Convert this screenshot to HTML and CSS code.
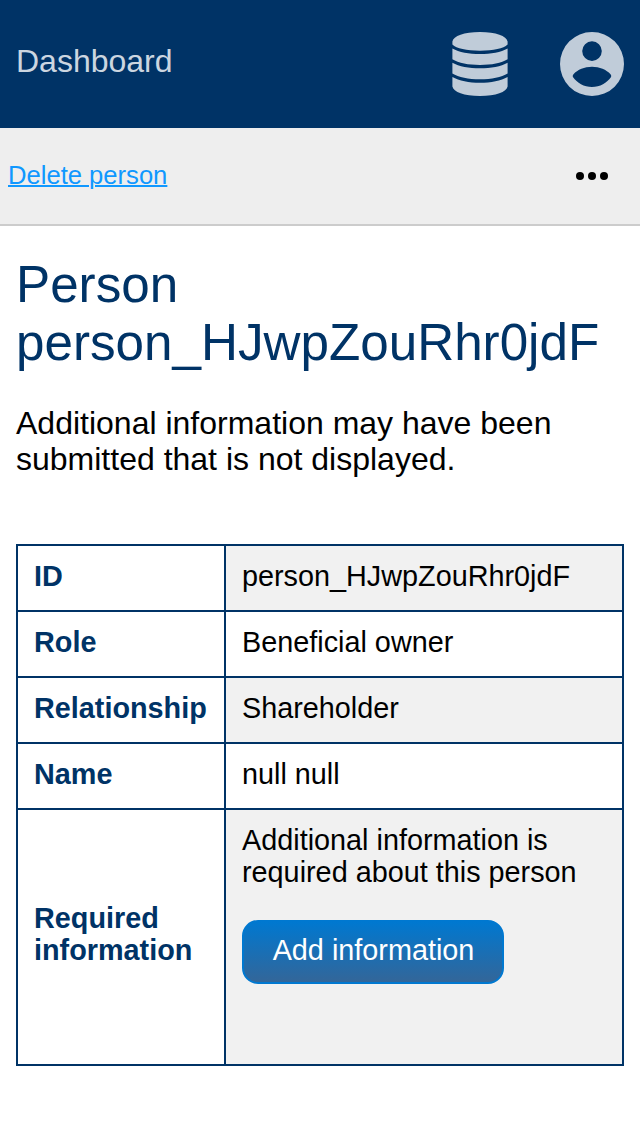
FILE: index.html
```html
<!DOCTYPE html>
<html lang="en">
<head>
<meta charset="utf-8">
<title>Person</title>
<link rel="stylesheet" href="styles.css">
</head>
<body>
<header class="header">
  <a class="brand">Dashboard</a>
  <div class="menus">
    <svg class="icon-db" viewBox="0 0 56 64"><path d="M.4 9.500C1.500 4 12 0 28 0s26.500 4 27.600 9.500v3C51.500 16.500 41.500 18.700 28 18.700S4.500 16.500.4 12.500zM.4 16.400C7 20.200 17 22 28 22S49 20.200 55.600 16.400v10.800C49.500 31 39.500 32.900 28 32.900S6.500 31 .4 27.200zM.4 30.800C7 34.600 17 36.300 28 36.300s21-1.700 27.600-5.500v10.700C49.500 45.300 39.500 47.300 28 47.300S6.500 45.300.4 41.500zM.4 45C7 48.900 17 50.800 28 50.800s21-1.900 27.600-5.800v9.500C54.500 60 44 64 28 64S1.500 60 .4 54.500z"/></svg>
    <svg class="icon-user" viewBox="0 0 64 64"><path fill-rule="evenodd" d="M32 0a32 32 0 1 0 0 64a32 32 0 1 0 0-64zM32 9.300a9.800 9.800 0 1 1 0 19.600a9.800 9.800 0 1 1 0-19.600zM32 55C24 55 17 50.700 13.100 45.200C12.500 44.200 12.700 43.100 13.500 42.200C17.500 37.600 24.500 34.700 32 34.700S46.500 37.600 50.500 42.200C51.300 43.100 51.500 44.200 50.900 45.200C47 50.700 40 55 32 55z"/></svg>
  </div>
</header>
<nav class="navbar">
  <a class="nav-link">Delete person</a>
  <svg class="dots" viewBox="0 0 32 8"><circle cx="4" cy="4" r="4"/><circle cx="16" cy="4" r="4"/><circle cx="28" cy="4" r="4"/></svg>
</nav>
<main class="content">
  <h1 class="title">Person person_HJwpZouRhr0jdF</h1>
  <p class="intro">Additional information may have been submitted that is not displayed.</p>
  <table class="details">
    <tr><th>ID</th><td>person_HJwpZouRhr0jdF</td></tr>
    <tr><th>Role</th><td>Beneficial owner</td></tr>
    <tr><th>Relationship</th><td>Shareholder</td></tr>
    <tr><th>Name</th><td>null null</td></tr>
    <tr class="required"><th>Required information</th><td>Additional information is required about this person<a class="button">Add information</a></td></tr>
  </table>
</main>
</body>
</html>
```
FILE: styles.css
```css
body {
  margin: 0;
  background: #fff;
  color: #000;
  font-family: "Liberation Sans", Arial, sans-serif;
}
.header {
  box-sizing: border-box;
  display: flex;
  justify-content: space-between;
  height: 128px;
  padding: 32px 16px;
  background: #036;
}
.brand {
  color: #ccd6e0;
  font-size: 32px;
  line-height: 58px;
}
.menus { display: flex; gap: 52px; fill: #c0ccd9; }
.icon-db { width: 56px; height: 64px; }
.icon-user { width: 64px; height: 64px; }
.navbar {
  box-sizing: border-box;
  display: flex;
  align-items: center;
  justify-content: space-between;
  height: 98px;
  padding: 0 32px 0 8px;
  border-bottom: 2px solid #ccc;
  background: #eee;
}
.nav-link {
  padding-bottom: 2px;
  color: #1098ff;
  font-size: 25.6px;
  text-decoration: underline;
  text-decoration-thickness: 2px;
}
.dots { width: 32px; height: 8px; }
.content { padding: 30px 16px 0; }
.title {
  margin: 0;
  color: #036;
  font-size: 51.2px;
  font-weight: 400;
  line-height: 58px;
}
.intro {
  margin: 33px 0 67px;
  font-size: 32px;
  line-height: 36px;
}
.details {
  width: 608px;
  border-collapse: collapse;
  table-layout: fixed;
  font-size: 28.8px;
  line-height: 32px;
}
.details th, .details td {
  box-sizing: border-box;
  height: 66px;
  padding: 14px 16px 18px;
  border: 2px solid #036;
  text-align: left;
}
.details th { width: 208px; color: #036; }
.details tr:nth-child(odd) td { background: #f1f1f1; }
.details .required th { padding-bottom: 20px; }
.details .required td { height: 256px; vertical-align: top; }
.button {
  display: block;
  box-sizing: border-box;
  width: 262px;
  height: 64px;
  margin-top: 32px;
  padding-left: 1px;
  border: 2px solid #0078d0;
  border-radius: 16px;
  background: linear-gradient(#0078d0, #369);
  color: #fff;
  line-height: 57px;
  text-align: center;
}
```
